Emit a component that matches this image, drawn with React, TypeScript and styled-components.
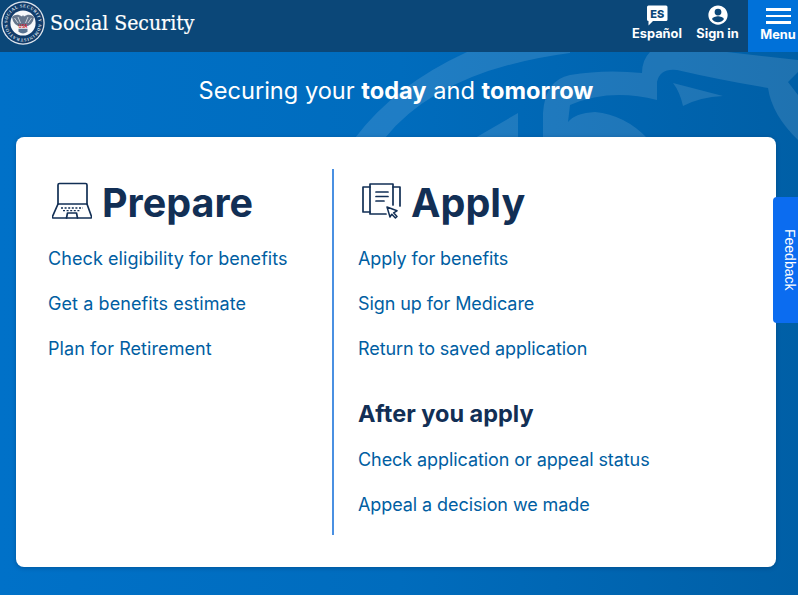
import React from 'react';
import styled, { createGlobalStyle } from 'styled-components';

const GlobalStyle = createGlobalStyle`
  html, body {
    margin: 0;
    padding: 0;
    height: 100%;
    overflow: hidden;
  }
  body {
    font-family: Inter, "Noto Sans", sans-serif;
  }
`;

const Page = styled.div`
  position: relative;
  width: 798px;
  height: 595px;
  overflow: hidden;
  background: linear-gradient(90deg, #0071c8 0%, #006cbd 50%, #005fa6 100%);
`;

const Watermark = styled.svg`
  position: absolute;
  left: 0;
  top: 0;
  width: 798px;
  height: 595px;
`;

const Header = styled.header`
  position: relative;
  display: flex;
  align-items: stretch;
  height: 52px;
  background: #0b4778;
  color: #fff;
`;

const Brand = styled.a`
  display: flex;
  align-items: center;
  gap: 5px;
  padding-left: 1px;
  flex: 1;
`;

const BrandName = styled.span`
  font-family: "DejaVu Serif Condensed", "DejaVu Serif", serif;
  font-size: 21px;
  -webkit-text-stroke: 0.2px #fff;
  color: #fff;
  margin-top: -7px;
`;

const Seal = styled.svg`
  width: 44px;
  height: 44px;
  margin-top: -6px;
`;

const HeaderAction = styled.a`
  display: flex;
  flex-direction: column;
  align-items: center;
  width: ${(p: { $w: number }) => p.$w}px;
  padding-top: 4px;
  box-sizing: border-box;
  font-size: 12.8px;
  font-weight: 700;
  line-height: 14px;
  color: #fff;
`;

const ActionIcon = styled.svg`
  width: 22px;
  height: 22px;
  margin-bottom: 1px;
`;

const MenuButton = styled.button`
  display: flex;
  flex-direction: column;
  align-items: center;
  box-sizing: border-box;
  width: 50px;
  padding: 8px 0 0 10px;
  border: 0;
  background: #0071d9;
  color: #fff;
  font-family: inherit;
  font-size: 12.8px;
  font-weight: 700;
  line-height: 15px;
`;

const MenuBars = styled.span`
  display: flex;
  flex-direction: column;
  gap: 4px;
  width: 25px;
  margin-bottom: 3px;
`;

const MenuBar = styled.span`
  height: 2.5px;
  background: #fff;
`;

const Tagline = styled.h1`
  position: relative;
  margin: 0;
  height: 85px;
  padding: 23px 6px 0 0;
  box-sizing: border-box;
  text-align: center;
  font-size: 23.6px;
  line-height: 32px;
  font-weight: 400;
  color: #fff;
  strong {
    font-weight: 700;
  }
`;

const Card = styled.main`
  position: relative;
  display: flex;
  width: 760px;
  height: 430px;
  margin-left: 16px;
  box-sizing: border-box;
  padding: 32px 0;
  background: #fff;
  border-radius: 8px;
  box-shadow: 0 1px 4px rgba(0, 40, 80, 0.35);
`;

const Column = styled.section`
  width: ${(p: { $w: number }) => p.$w}px;
  box-sizing: border-box;
  padding-left: ${(p: { $pad: number }) => p.$pad}px;
`;

const LeftColumn = styled(Column)`
  height: 366px;
  border-right: 2px solid #4a90e2;
`;

const HeadingRow = styled.div`
  display: flex;
  align-items: center;
  gap: 10px;
  height: 48px;
  margin-top: 10px;
  margin-bottom: 20px;
  padding-left: 4px;
`;

const Heading = styled.h2`
  margin: 0;
  font-size: 39.5px;
  line-height: 48px;
  font-weight: 700;
  color: #122f55;
`;

const HeadingIcon = styled.svg`
  flex: none;
  margin-bottom: 4px;
  fill: none;
  stroke: #122f55;
  stroke-width: 1.7;
  stroke-linejoin: round;
  stroke-linecap: round;
`;

const SubHeading = styled.h3`
  margin: 37px 0 18px;
  font-size: 23.5px;
  line-height: 32px;
  font-weight: 700;
  color: #122f55;
`;

const LinkList = styled.ul`
  list-style: none;
  margin: 0;
  padding: 0;
  display: flex;
  flex-direction: column;
  gap: 21px;
`;

const LinkText = styled.a<{ $spacing: number }>`
  display: block;
  font-size: 18px;
  line-height: 24px;
  letter-spacing: ${(p) => p.$spacing}px;
  color: #005ea2;
`;

const FeedbackTab = styled.a`
  position: absolute;
  right: 0;
  top: 197px;
  width: 25px;
  height: 126px;
  display: flex;
  align-items: center;
  justify-content: center;
  box-sizing: border-box;
  padding-left: 9px;
  background: #0b6cf0;
  border-radius: 4px 0 0 4px;
  color: #fff;
  font-family: "Liberation Sans", sans-serif;
  font-size: 14px;
  writing-mode: vertical-rl;
`;

const SealIcon = () => (
  <Seal viewBox="0 0 44 44">
    <defs>
      <path id="sealRing" d="M22 22 m-15.6 0 a15.6 15.6 0 1 1 31.2 0 a15.6 15.6 0 1 1 -31.2 0" />
    </defs>
    <circle cx="22" cy="22" r="21.7" fill="#dfe6ee" />
    <circle cx="22" cy="22" r="20.4" fill="#123c6b" />
    <circle cx="22" cy="22" r="12.6" fill="#f7f8fa" />
    <text fontSize="4.4" fontWeight="700" fontFamily="Liberation Serif, serif" fill="#dfe6ee" textLength="96">
      <textPath href="#sealRing">SOCIAL SECURITY ADMINISTRATION</textPath>
    </text>
    <path
      d="M21 15.5 C17 13 14 13.5 11 16 L12 20 L14 23 L17 25 H27 L30 23 L32 20 L33 16 C30 13.5 27 13 23 15.5 L22 14 Z"
      fill="#66768c"
    />
    <path d="M13.5 17 L17 22 M17 16 L19.5 22 M30.5 17 L27 22 M27 16 L24.5 22" stroke="#f7f8fa" strokeWidth="0.7" fill="none" />
    <text x="22" y="27" fontSize="4.2" fontWeight="700" textAnchor="middle" fill="#c8202f" fontFamily="Inter, sans-serif">
      USA
    </text>
    <path d="M17.5 27.8 h9 v3 q-4.5 3.4 -9 0 Z" fill="#5a7391" />
  </Seal>
);

const Espanol = () => (
  <ActionIcon viewBox="1 1 22 22">
    <path
      d="M3.5 2.5 H21 a1.5 1.5 0 0 1 1.5 1.5 V16.5 a1.5 1.5 0 0 1 -1.5 1.5 H8 L3.5 22.5 V18 a1.5 1.5 0 0 1 -1.5 -1.5 V4 a1.5 1.5 0 0 1 1.5 -1.5 Z"
      fill="#fff"
    />
    <text x="12.2" y="14.6" fontSize="11" fontWeight="800" textAnchor="middle" fill="#0b4778" fontFamily="Inter, sans-serif">
      ES
    </text>
  </ActionIcon>
);

const Account = () => (
  <ActionIcon viewBox="0 0 24 24">
    <path
      fill="#fff"
      d="M12 1.5C6.2 1.5 1.5 6.2 1.5 12S6.2 22.5 12 22.5 22.5 17.8 22.5 12 17.8 1.5 12 1.5zm0 3.6a3.7 3.7 0 1 1 0 7.4 3.7 3.7 0 0 1 0-7.4zm0 14.7c-2.7 0-5-1.3-6.4-3.3.1-2 4.3-3.1 6.4-3.1s6.3 1.1 6.4 3.1c-1.4 2-3.7 3.3-6.4 3.3z"
    />
  </ActionIcon>
);

const LaptopIcon = () => (
  <HeadingIcon width="40" height="38" viewBox="0 0 40 38">
    <path d="M6 22 V3 a1.5 1.5 0 0 1 1.5 -1.5 H33.5 a1.5 1.5 0 0 1 1.5 1.5 V22" />
    <path d="M6 22 H35 L39.5 34.5 a1 1 0 0 1 -1 1.5 H1.5 a1 1 0 0 1 -1 -1.5 Z" />
    <path d="M14.5 36 L15.5 31 H24.5 L25.5 36" />
    <path d="M9 26 H31" strokeDasharray="2 1.6" strokeLinecap="butt" />
    <path d="M11 28.6 H29" strokeDasharray="2 1.6" strokeLinecap="butt" strokeWidth="1.2" />
  </HeadingIcon>
);

const DocsIcon = () => (
  <HeadingIcon width="39" height="36" viewBox="0 0 39 36">
    <path d="M8 4 H1 V29 H8" />
    <path d="M31 4 H38 V23" />
    <path d="M24 31 H8 V1 H31 V22" />
    <path d="M14 9 H26 M14 13.5 H26 M14 18 H22" />
    <path d="M25 24 L35 27.8 L31.6 29.8 L35 33.4 L33.4 35 L29.8 31.2 L28 34 Z" strokeWidth="1.5" />
  </HeadingIcon>
);

const prepareLinks = ['Check eligibility for benefits', 'Get a benefits estimate', 'Plan for Retirement'];
const applyLinks = ['Apply for benefits', 'Sign up for Medicare', 'Return to saved application'];
const afterLinks = ['Check application or appeal status', 'Appeal a decision we made'];

const App = () => {
  return (
    <Page>
      <GlobalStyle />
      <Watermark viewBox="0 0 798 595" fill="#ffffff" fillOpacity="0.12">
        <path d="M355 138 Q395 85 467 52 H570 V53 Q440 70 385 138 Z" />
        <path d="M475 138 L518 113 V138 Z" />
        <path d="M543 138 V113 Q545 80 570 75 Q605 69 642 73 Q642 60 650 52 H727 L798 60 V72 L788 82 L798 95 V140 Q772 115 768 88 Q720 80 677 70 Q660 68 657 82 V100 Q610 88 570 105 L568 122 Q575 113 595 112 Q625 115 647 138 Z" />
        <path d="M673 83 L723 96 Q700 97 683 106 Q680 92 673 83 Z" />
      </Watermark>
      <Header>
        <Brand>
          <SealIcon />
          <BrandName>Social Security</BrandName>
        </Brand>
        <HeaderAction $w={60}>
          <Espanol />
          Español
        </HeaderAction>
        <HeaderAction $w={61}>
          <Account />
          Sign in
        </HeaderAction>
        <MenuButton>
          <MenuBars>
            <MenuBar />
            <MenuBar />
            <MenuBar />
          </MenuBars>
          Menu
        </MenuButton>
      </Header>
      <Tagline>
        Securing your <strong>today</strong> and <strong>tomorrow</strong>
      </Tagline>
      <Card>
        <LeftColumn $w={318} $pad={32}>
          <HeadingRow>
            <LaptopIcon />
            <Heading>Prepare</Heading>
          </HeadingRow>
          <LinkList>
            {prepareLinks.map((label) => (
              <li key={label}>
                <LinkText $spacing={0.08}>{label}</LinkText>
              </li>
            ))}
          </LinkList>
        </LeftColumn>
        <Column $w={440} $pad={24}>
          <HeadingRow>
            <DocsIcon />
            <Heading>Apply</Heading>
          </HeadingRow>
          <LinkList>
            {applyLinks.map((label) => (
              <li key={label}>
                <LinkText $spacing={-0.08}>{label}</LinkText>
              </li>
            ))}
          </LinkList>
          <SubHeading>After you apply</SubHeading>
          <LinkList>
            {afterLinks.map((label) => (
              <li key={label}>
                <LinkText $spacing={-0.08}>{label}</LinkText>
              </li>
            ))}
          </LinkList>
        </Column>
      </Card>
      <FeedbackTab>Feedback</FeedbackTab>
    </Page>
  );
};

export default App;
